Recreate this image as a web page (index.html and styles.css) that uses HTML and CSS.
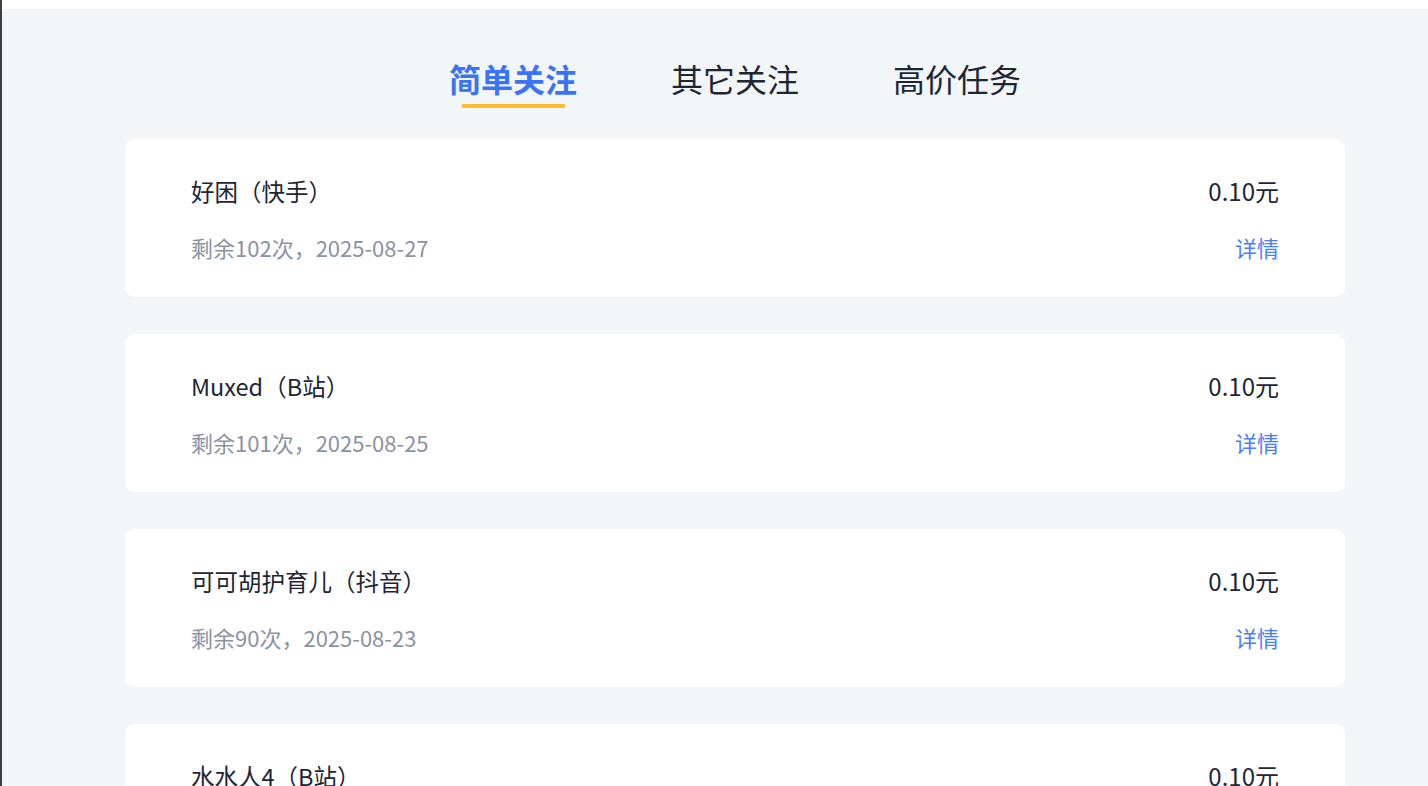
FILE: index.html
```html
<!DOCTYPE html>
<html lang="zh-CN">
<head>
    <meta charset="UTF-8">
    <meta name="viewport" content="width=device-width, initial-scale=1.0">
    <title>任务列表</title>
    <link rel="stylesheet" href="styles.css">
</head>
<body>
    <div class="top-bar"></div>

    <div class="container">
        <div class="tabs">
            <div class="tab active">简单关注</div>
            <div class="tab">其它关注</div>
            <div class="tab">高价任务</div>
        </div>

        <div class="task-list">
            <div class="task-card">
                <div class="task-row">
                    <span class="task-title">好困（快手）</span>
                    <span class="task-price">0.10元</span>
                </div>
                <div class="task-row sub">
                    <span class="task-info">剩余102次，2025-08-27</span>
                    <a class="task-detail" href="#">详情</a>
                </div>
            </div>

            <div class="task-card">
                <div class="task-row">
                    <span class="task-title">Muxed（B站）</span>
                    <span class="task-price">0.10元</span>
                </div>
                <div class="task-row sub">
                    <span class="task-info">剩余101次，2025-08-25</span>
                    <a class="task-detail" href="#">详情</a>
                </div>
            </div>

            <div class="task-card">
                <div class="task-row">
                    <span class="task-title">可可胡护育儿（抖音）</span>
                    <span class="task-price">0.10元</span>
                </div>
                <div class="task-row sub">
                    <span class="task-info">剩余90次，2025-08-23</span>
                    <a class="task-detail" href="#">详情</a>
                </div>
            </div>

            <div class="task-card">
                <div class="task-row">
                    <span class="task-title">水水人4（B站）</span>
                    <span class="task-price">0.10元</span>
                </div>
                <div class="task-row sub">
                    <span class="task-info">剩余88次，2025-08-21</span>
                    <a class="task-detail" href="#">详情</a>
                </div>
            </div>
        </div>
    </div>
</body>
</html>
```

FILE: styles.css
```css
:root {
    --bg-color: #f3f6f9;
    --card-bg: #ffffff;
    --text-color: #1e2636;
    --sub-color: #8b93a3;
    --active-color: #3b73f6;
    --link-color: #4b7ef7;
    --bar-color: #fbbd2e;
}

html, body {
    height: 100%;
    overflow: hidden;
}

body {
    margin: 0;
    font-family: "Noto Sans CJK SC", "Noto Sans", sans-serif;
    background-color: var(--bg-color);
    color: var(--text-color);
    border-left: 2px solid #3f3f3f;
    box-sizing: border-box;
}

.top-bar {
    height: 9px;
    background-color: #ffffff;
}

.container {
    padding: 0 83px 0 123px;
}

.tabs {
    display: flex;
    justify-content: center;
    gap: 94px;
    padding-top: 47px;
    margin-bottom: 31px;
}

.tab {
    font-size: 32px;
    line-height: 44px;
    padding-bottom: 8px;
    position: relative;
    cursor: pointer;
}

.tab.active {
    color: var(--active-color);
    font-weight: bold;
}

.tab.active:after {
    content: "";
    position: absolute;
    left: 50%;
    bottom: 0;
    width: 103px;
    height: 4px;
    margin-left: -51px;
    background-color: var(--bar-color);
}

.task-card {
    background: var(--card-bg);
    border-radius: 10px;
    padding: 37px 66px 35px;
    margin-bottom: 37px;
}

.task-row {
    display: flex;
    justify-content: space-between;
    align-items: center;
    line-height: 30px;
}

.task-title {
    font-size: 23.5px;
}

.task-price {
    font-size: 24px;
}

.task-row.sub {
    margin-top: 26px;
    font-size: 22px;
}

.task-info {
    color: var(--sub-color);
}

.task-detail {
    color: var(--link-color);
    text-decoration: none;
}
```
